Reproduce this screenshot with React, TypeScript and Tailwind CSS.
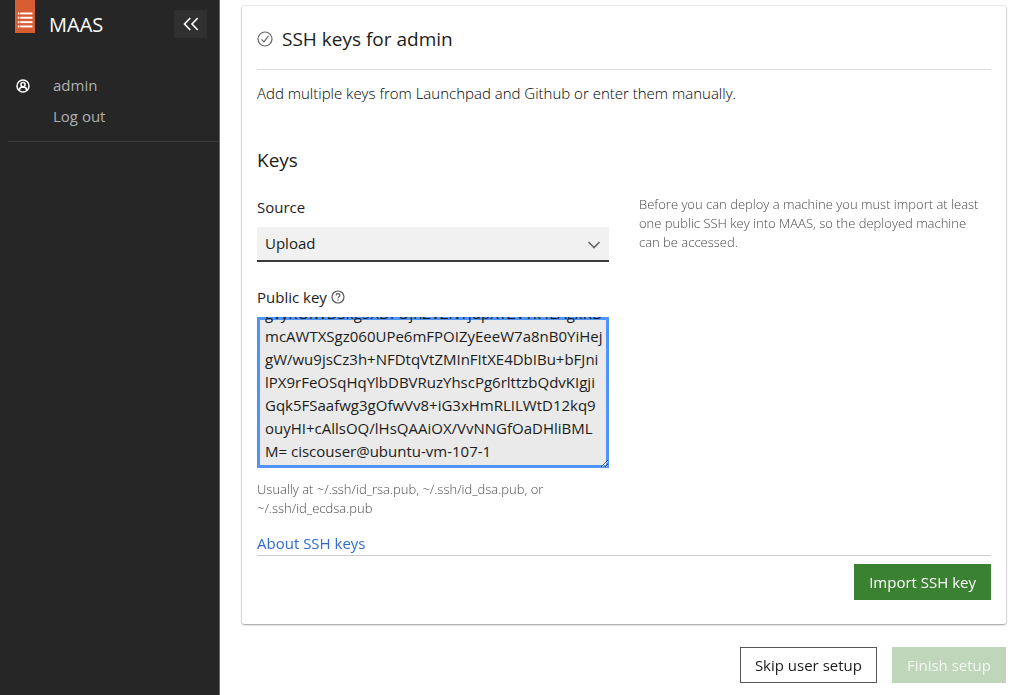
import React, { useEffect, useRef, useState } from 'react';

const initialKey = [
  'gvyROlWDSkg5XDFOjnZVZNTjdpXTZVTk4LAgxRD',
  'mcAWTXSgz060UPe6mFPOIZyEeeW7a8nB0YiHej',
  'gW/wu9jsCz3h+NFDtqVtZMInFItXE4DbIBu+bFJni',
  'lPX9rFeOSqHqYlbDBVRuzYhscPg6rlttzbQdvKIgji',
  'Gqk5FSaafwg3gOfwVv8+iG3xHmRLILWtD12kq9',
  'ouyHI+cAllsOQ/lHsQAAiOX/VvNNGfOaDHliBML',
  'M= ciscouser@ubuntu-vm-107-1',
].join('\n');

const Sidebar = () => (
  <aside className="w-[220px] shrink-0 bg-[#262626] border-r border-[#6b6b6b]">
    <div className="flex items-start pl-[15px] pr-3">
      <svg className="h-[33px] w-5 shrink-0" viewBox="0 0 20 33" aria-hidden="true">
        <rect width="20" height="33" fill="#d95d32" />
        <g fill="#fff">
          {[12.5, 16.8, 21.2, 25.5].map((y) => (
            <g key={y}>
              <rect x="2.8" y={y} width="1.6" height="1.9" />
              <rect x="5.2" y={y} width="12.3" height="1.9" />
            </g>
          ))}
        </g>
      </svg>
      <span className="ml-[14px] mt-[11px] text-[20px] leading-7 text-white">MAAS</span>
      <button
        type="button"
        aria-label="Collapse navigation"
        className="ml-auto mt-[10px] flex h-7 w-[33px] items-center justify-center bg-[#303030]"
      >
        <svg className="h-4 w-4" viewBox="0 0 16 16" fill="none" stroke="#fff" strokeWidth="1.6" aria-hidden="true">
          <path d="M7.3 2 1.5 8l5.8 6M14.8 2 9 8l5.8 6" />
        </svg>
      </button>
    </div>
    <nav className="ml-2 mt-[31px] border-b border-[#3d3d3d] pb-[9px] text-[#b0b0b0]">
      <a href="#admin" className="flex h-[31px] items-center pl-2">
        <svg className="h-[14px] w-[14px]" viewBox="0 0 14 14" fill="none" stroke="#fff" strokeWidth="1.5" aria-hidden="true">
          <circle cx="7" cy="7" r="6" />
          <circle cx="7" cy="5.6" r="2.1" />
          <path d="M3.6 11.4v-.9c0-1.500 1-2.300 2.100-2.300h2.600c1.100 0 2.100.8 2.100 2.300v.9" />
        </svg>
        <span className="ml-[23px]">admin</span>
      </a>
      <button type="button" className="flex h-[31px] items-center pl-[45px]">
        Log out
      </button>
    </nav>
  </aside>
);

const SshKeyForm = () => {
  const [source, setSource] = useState('upload');
  const [publicKey, setPublicKey] = useState(initialKey);
  const keyRef = useRef<HTMLTextAreaElement>(null);

  // put the caret at the end of the key and keep its last line in view
  useEffect(() => {
    const el = keyRef.current;
    if (!el) return;
    el.focus();
    el.setSelectionRange(el.value.length, el.value.length);
    el.scrollTop = el.scrollHeight;
  }, []);

  return (
    <form onSubmit={(e) => e.preventDefault()}>
      <div className="grid grid-cols-2 gap-[30px]">
        <div>
          <label htmlFor="source" className="block leading-6">
            Source
          </label>
          <div className="mt-2 grid">
            <select
              id="source"
              value={source}
              onChange={(e) => setSource(e.target.value)}
              className="col-start-1 row-start-1 h-[35px] w-full appearance-none border-b-2 border-[#3c3c3c] bg-[#f1f1f1] px-2"
            >
              <option value="launchpad">Launchpad</option>
              <option value="github">GitHub</option>
              <option value="upload">Upload</option>
            </select>
            <svg
              className="pointer-events-none col-start-1 row-start-1 mr-2 h-[14px] w-[14px] self-center justify-self-end"
              viewBox="0 0 14 14"
              fill="none"
              stroke="#666"
              strokeWidth="1.6"
              aria-hidden="true"
            >
              <path d="m1.500 4 5.500 5.500L12.500 4" />
            </svg>
          </div>

          <div className="mt-[23px] flex items-center gap-1">
            <label htmlFor="public-key" className="leading-6">
              Public key
            </label>
            <svg className="h-[14px] w-[14px]" viewBox="0 0 14 14" fill="none" stroke="#555" strokeWidth="1.2" aria-hidden="true">
              <circle cx="7" cy="7" r="6" />
              <path d="M5.100 5.500c0-1.100.8-1.800 1.900-1.800s1.900.7 1.900 1.600c0 1.300-1.800 1.400-1.800 2.900M7.100 9.200v1.400" />
            </svg>
          </div>
          <textarea
            id="public-key"
            ref={keyRef}
            value={publicKey}
            onChange={(e) => setPublicKey(e.target.value)}
            aria-describedby="public-key-help"
            className="mt-2 block h-[151px] w-full resize-y overflow-hidden whitespace-pre bg-[#eaeaea] px-2 py-[5px] leading-[23px] outline-none focus:shadow-[inset_0_0_0_3px_#4f94f8]"
          />
          <p id="public-key-help" className="mt-3 text-[13px] font-light leading-[19px] text-[#4a4a4a]">
            Usually at ~/.ssh/id_rsa.pub, ~/.ssh/id_dsa.pub, or
            <br />
            ~/.ssh/id_ecdsa.pub
          </p>
          <a href="#about-ssh-keys" className="mt-[13px] block leading-6 text-[#2f6bd0]">
            About SSH keys
          </a>
        </div>
        <p className="text-[13px] font-light leading-[19px] text-[#4a4a4a]">
          Before you can deploy a machine you must import at least one public SSH key into MAAS, so the deployed machine
          <br />
          can be accessed.
        </p>
      </div>
      <div className="flex justify-end border-t border-[#cdcdcd] pt-2">
        <button type="submit" className="h-9 bg-[#3b8132] px-[15px] text-white">
          Import SSH key
        </button>
      </div>
    </form>
  );
};

const App = () => (
  <div className="flex min-h-screen bg-white font-['Open_Sans','Noto_Sans',sans-serif] text-[15px] text-[#1c1c1c]">
    <Sidebar />
    <main className="min-w-0 flex-1 pb-3 pl-[22px] pr-[18px] pt-[6px]">
      <section className="rounded-xs px-[15px] pb-6 pt-[19px] shadow-[0_1px_2px_0_rgba(0,0,0,0.35),0_0_1px_1px_rgba(0,0,0,0.08)]">
        <div className="flex items-center gap-[9px] border-b border-[#dcdcdc] pb-4">
          <svg className="h-4 w-4" viewBox="0 0 16 16" fill="none" stroke="#666" strokeWidth="1.2" aria-hidden="true">
            <circle cx="8" cy="8" r="7" />
            <path d="m4.500 8.300 2.400 2.500 4.600-6" />
          </svg>
          <h1 className="text-[19px] leading-7">SSH keys for admin</h1>
        </div>
        <p className="mt-[11px] font-light leading-6 text-black">
          Add multiple keys from Launchpad and Github or enter them manually.
        </p>
        <h2 className="mb-[21px] mt-[41px] text-[19px] leading-7">Keys</h2>
        <SshKeyForm />
      </section>
      <div className="mt-[23px] flex justify-end gap-[15px]">
        <button type="button" className="h-9 border border-[#555] px-[14px]">
          Skip user setup
        </button>
        <button type="button" disabled className="h-9 bg-[#bfd6bb] px-[15px] text-[#f2f7f1]">
          Finish setup
        </button>
      </div>
    </main>
  </div>
);

export default App;
